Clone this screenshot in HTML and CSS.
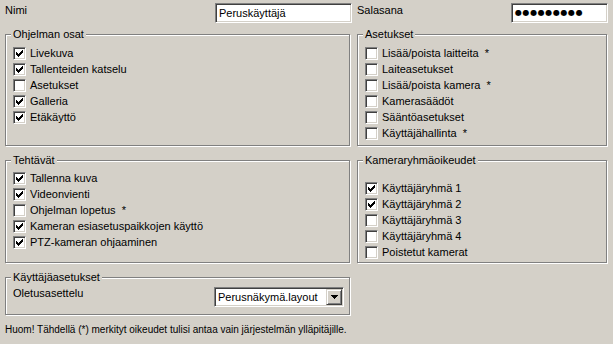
FILE: index.html
```html
<!DOCTYPE html>
<html lang="fi">
<head>
<meta charset="utf-8">
<title>Käyttäjä</title>
<link rel="stylesheet" href="styles.css">
</head>
<body>
<div class="page">
  <div class="top">
    <div class="field">
      <span class="lbl">Nimi</span>
      <span class="input name">Peruskäyttäjä</span>
    </div>
    <div class="field">
      <span class="lbl">Salasana</span>
      <span class="input pw">●●●●●●●●●</span>
    </div>
  </div>

  <div class="groups">
    <div class="group g1">
      <span class="legend">Ohjelman osat</span>
      <div class="list">
        <div class="item"><span class="cb on"><svg viewBox="1 1 11 11" width="11" height="11"><path d="M3 5h1v3H3zM4 6h1v3H4zM5 7h1v3H5zM6 6h1v3H6zM7 5h1v3H7zM8 4h1v3H8zM9 3h1v3H9z"/></svg></span>Livekuva</div>
        <div class="item"><span class="cb on"><svg viewBox="1 1 11 11" width="11" height="11"><path d="M3 5h1v3H3zM4 6h1v3H4zM5 7h1v3H5zM6 6h1v3H6zM7 5h1v3H7zM8 4h1v3H8zM9 3h1v3H9z"/></svg></span>Tallenteiden katselu</div>
        <div class="item"><span class="cb"></span>Asetukset</div>
        <div class="item"><span class="cb on"><svg viewBox="1 1 11 11" width="11" height="11"><path d="M3 5h1v3H3zM4 6h1v3H4zM5 7h1v3H5zM6 6h1v3H6zM7 5h1v3H7zM8 4h1v3H8zM9 3h1v3H9z"/></svg></span>Galleria</div>
        <div class="item"><span class="cb on"><svg viewBox="1 1 11 11" width="11" height="11"><path d="M3 5h1v3H3zM4 6h1v3H4zM5 7h1v3H5zM6 6h1v3H6zM7 5h1v3H7zM8 4h1v3H8zM9 3h1v3H9z"/></svg></span>Etäkäyttö</div>
      </div>
    </div>

    <div class="group g1">
      <span class="legend">Asetukset</span>
      <div class="list">
        <div class="item"><span class="cb"></span>Lisää/poista laitteita <span class="star">*</span></div>
        <div class="item"><span class="cb"></span>Laiteasetukset</div>
        <div class="item"><span class="cb"></span>Lisää/poista kamera <span class="star">*</span></div>
        <div class="item"><span class="cb"></span>Kamerasäädöt</div>
        <div class="item"><span class="cb"></span>Sääntöasetukset</div>
        <div class="item"><span class="cb"></span>Käyttäjähallinta <span class="star">*</span></div>
      </div>
    </div>

    <div class="group g2">
      <span class="legend">Tehtävät</span>
      <div class="list">
        <div class="item"><span class="cb on"><svg viewBox="1 1 11 11" width="11" height="11"><path d="M3 5h1v3H3zM4 6h1v3H4zM5 7h1v3H5zM6 6h1v3H6zM7 5h1v3H7zM8 4h1v3H8zM9 3h1v3H9z"/></svg></span>Tallenna kuva</div>
        <div class="item"><span class="cb on"><svg viewBox="1 1 11 11" width="11" height="11"><path d="M3 5h1v3H3zM4 6h1v3H4zM5 7h1v3H5zM6 6h1v3H6zM7 5h1v3H7zM8 4h1v3H8zM9 3h1v3H9z"/></svg></span>Videonvienti</div>
        <div class="item"><span class="cb"></span>Ohjelman lopetus <span class="star">*</span></div>
        <div class="item"><span class="cb on"><svg viewBox="1 1 11 11" width="11" height="11"><path d="M3 5h1v3H3zM4 6h1v3H4zM5 7h1v3H5zM6 6h1v3H6zM7 5h1v3H7zM8 4h1v3H8zM9 3h1v3H9z"/></svg></span>Kameran esiasetuspaikkojen käyttö</div>
        <div class="item"><span class="cb on"><svg viewBox="1 1 11 11" width="11" height="11"><path d="M3 5h1v3H3zM4 6h1v3H4zM5 7h1v3H5zM6 6h1v3H6zM7 5h1v3H7zM8 4h1v3H8zM9 3h1v3H9z"/></svg></span>PTZ-kameran ohjaaminen</div>
      </div>
    </div>

    <div class="group g2 cams">
      <span class="legend">Kameraryhmäoikeudet</span>
      <div class="list">
        <div class="item"><span class="cb on"><svg viewBox="1 1 11 11" width="11" height="11"><path d="M3 5h1v3H3zM4 6h1v3H4zM5 7h1v3H5zM6 6h1v3H6zM7 5h1v3H7zM8 4h1v3H8zM9 3h1v3H9z"/></svg></span>Käyttäjäryhmä 1</div>
        <div class="item"><span class="cb on"><svg viewBox="1 1 11 11" width="11" height="11"><path d="M3 5h1v3H3zM4 6h1v3H4zM5 7h1v3H5zM6 6h1v3H6zM7 5h1v3H7zM8 4h1v3H8zM9 3h1v3H9z"/></svg></span>Käyttäjäryhmä 2</div>
        <div class="item"><span class="cb"></span>Käyttäjäryhmä 3</div>
        <div class="item"><span class="cb"></span>Käyttäjäryhmä 4</div>
        <div class="item"><span class="cb"></span>Poistetut kamerat</div>
      </div>
    </div>

    <div class="group g3">
      <span class="legend">Käyttäjäasetukset</span>
      <div class="row">
        <span class="lbl2">Oletusasettelu</span>
        <span class="select"><span class="sel-text">Perusnäkymä.layout</span><span class="sel-btn"><svg viewBox="0 0 7 4" width="7" height="4"><path d="M0 0h7L3.5 4z"/></svg></span></span>
      </div>
    </div>
  </div>

  <p class="note">Huom! Tähdellä (*) merkityt oikeudet tulisi antaa vain järjestelmän ylläpitäjille.</p>
</div>
</body>
</html>
```

FILE: styles.css
```css
html, body {
  margin: 0;
  padding: 0;
  background: #d4d0c8;
}
body {
  font-family: "Liberation Sans", Arial, sans-serif;
  font-size: 11px;
  color: #000;
}
.page {
  padding: 3px 5px 0 5px;
}
.top {
  display: grid;
  grid-template-columns: 347px 251px;
  column-gap: 5px;
  height: 20px;
}
.field {
  display: flex;
  justify-content: space-between;
  align-items: flex-start;
}
.lbl {
  line-height: 13px;
  padding-top: 1px;
}
.input {
  box-sizing: border-box;
  height: 20px;
  background: #fff;
  border: 1px solid;
  border-color: #808080 #fff #fff #808080;
  box-shadow: inset 1px 1px 0 #404040, inset -1px -1px 0 #d4d0c8;
  padding: 0 3px;
  line-height: 18px;
  white-space: nowrap;
  overflow: hidden;
}
.name { width: 137px; }
.pw {
  width: 97px;
  font-family: "DejaVu Sans", sans-serif;
  font-size: 8px;
  letter-spacing: 0.6px;
  padding-left: 3px;
}
.groups {
  margin-top: 11px;
  display: grid;
  grid-template-columns: 345px 250px;
  grid-template-rows: 112px 103px 38px;
  column-gap: 7px;
  row-gap: 14px;
}
.group {
  position: relative;
  box-sizing: border-box;
  border: 1px solid #808080;
  box-shadow: 1px 1px 0 #fff, inset 1px 1px 0 #fff;
}
.legend {
  position: absolute;
  top: -7px;
  left: 5px;
  padding: 0 2px;
  background: #d4d0c8;
  line-height: 13px;
}
.list {
  display: flex;
  flex-direction: column;
  gap: 3px;
  padding: 12px 0 0 7px;
}
.g2 .list { padding-top: 11px; }
.cams .list { padding-top: 21px; }
.item {
  display: flex;
  align-items: center;
  height: 13px;
  line-height: 13px;
  white-space: pre;
}
.star { margin-left: 3px; }
.cb {
  box-sizing: border-box;
  width: 13px;
  height: 13px;
  flex: none;
  margin-right: 4px;
  background: #fff;
  border: 1px solid;
  border-color: #808080 #fff #fff #808080;
  box-shadow: inset 1px 1px 0 #404040, inset -1px -1px 0 #d4d0c8;
}
.cb svg {
  display: block;
  shape-rendering: crispEdges;
}
.g3 {
  grid-column: 1;
}
.row {
  display: flex;
  justify-content: space-between;
  align-items: flex-start;
  padding: 9px 5px 0 7px;
}
.lbl2 {
  line-height: 13px;
}
.select {
  box-sizing: border-box;
  width: 130px;
  height: 20px;
  display: flex;
  background: #fff;
  border: 1px solid;
  border-color: #808080 #fff #fff #808080;
  box-shadow: inset 1px 1px 0 #404040, inset -1px -1px 0 #d4d0c8;
  padding: 1px;
}
.sel-text {
  flex: 1;
  line-height: 16px;
  padding-left: 2px;
  white-space: nowrap;
}
.sel-btn {
  box-sizing: border-box;
  width: 16px;
  height: 16px;
  background: #d4d0c8;
  border: 1px solid;
  border-color: #d4d0c8 #404040 #404040 #d4d0c8;
  box-shadow: inset 1px 1px 0 #fff, inset -1px -1px 0 #808080;
  display: flex;
  align-items: center;
  justify-content: center;
}
.sel-btn svg {
  display: block;
  shape-rendering: crispEdges;
}
.note {
  margin: 9px 0 0 0;
  font-size: 10px;
  line-height: 12px;
}
```
